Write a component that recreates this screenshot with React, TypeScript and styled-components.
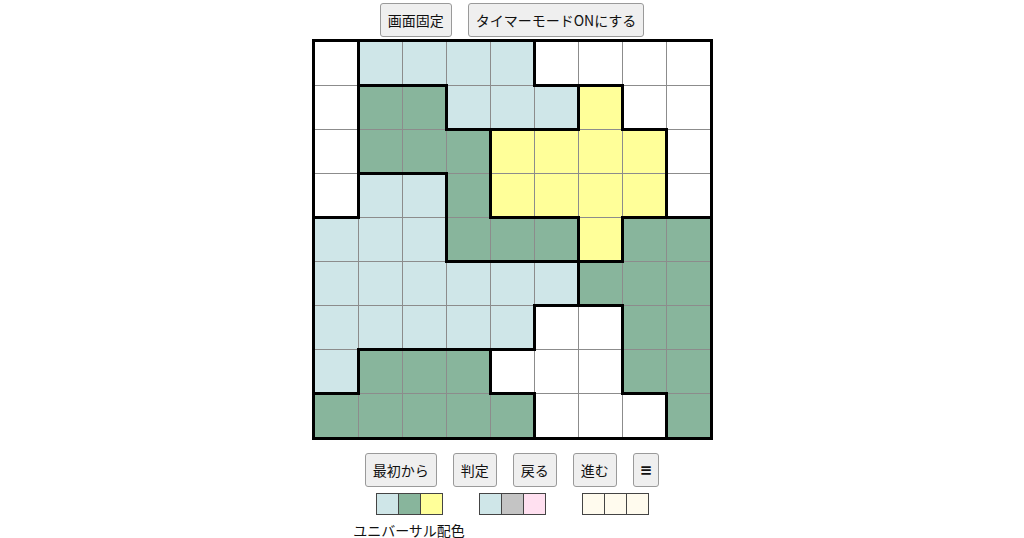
import React from "react";
import styled, { createGlobalStyle } from "styled-components";

const GlobalStyle = createGlobalStyle`
  body {
    margin: 0;
    background: #fff;
    font-family: "Noto Sans CJK JP", "Noto Sans", sans-serif;
    color: #111;
  }
`;

const COLORS: Record<string, string> = {
  W: "#ffffff",
  L: "#cfe6e8",
  G: "#88b59c",
  Y: "#ffff99",
};

const GRID = [
  "WLLLLWWWW",
  "WGGLLLYWW",
  "WGGGYYYYW",
  "WLLGYYYYW",
  "LLLGGGYGG",
  "LLLLLLGGG",
  "LLLLLWWGG",
  "LGGGWWWGG",
  "GGGGGWWWG",
];

const PALETTES = [
  { colors: ["#cfe6e8", "#88b59c", "#ffff99"], label: "ユニバーサル配色" },
  { colors: ["#cfe6e8", "#c4c4c4", "#ffe0f0"] },
  { colors: ["#fffbee", "#fffbee", "#fffbee"] },
];

const Page = styled.div`
  display: flex;
  flex-direction: column;
  align-items: center;
  padding-top: 3px;
`;

const ButtonRow = styled.div`
  display: flex;
  justify-content: center;
  gap: 16px;
`;

const BottomRow = styled(ButtonRow)`
  margin-top: 13px;
`;

const Button = styled.button`
  height: 34px;
  padding: 0 7px;
  font-family: "Noto Sans CJK JP", sans-serif;
  font-size: 14px;
  color: #111;
  background: #efefef;
  border: 1px solid #9a9a9a;
  border-radius: 3px;
  cursor: pointer;
`;

const MenuButton = styled(Button)`
  padding: 0 6px;
  font-family: "DejaVu Sans", sans-serif;
  font-size: 15px;
  font-weight: bold;
`;

const Board = styled.div`
  margin-top: 2px;
  display: grid;
  grid-template-columns: repeat(9, 43px);
  grid-auto-rows: 43px;
  gap: 1px;
  background: #8c8c8c;
  border: 3px solid #000;
`;

const Cell = styled.div<{ $fill: string; $right: boolean; $bottom: boolean }>`
  position: relative;
  background: ${(p) => p.$fill};

  &::after {
    content: "";
    display: ${(p) => (p.$right ? "block" : "none")};
    position: absolute;
    top: -2px;
    bottom: -2px;
    right: -2px;
    width: 3px;
    background: #000;
    z-index: 1;
  }

  &::before {
    content: "";
    display: ${(p) => (p.$bottom ? "block" : "none")};
    position: absolute;
    left: -2px;
    right: -2px;
    bottom: -2px;
    height: 3px;
    background: #000;
    z-index: 1;
  }
`;

const PaletteRow = styled.div`
  margin-top: 6px;
  display: flex;
  gap: 36px;
  align-items: flex-start;
`;

const PaletteGroup = styled.div`
  width: 67px;
  display: flex;
  flex-direction: column;
  align-items: center;
`;

const Swatches = styled.div`
  display: flex;
`;

const Swatch = styled.div<{ $color: string }>`
  width: 21px;
  height: 20px;
  background: ${(p) => p.$color};
  border: 1px solid #444;
  & + & {
    margin-left: -1px;
  }
`;

const PaletteLabel = styled.div`
  margin-top: 7px;
  font-size: 14px;
  line-height: 16px;
  white-space: nowrap;
  color: #111;
`;

export default function App() {
  return (
    <>
      <GlobalStyle />
      <Page>
        <ButtonRow>
          <Button>画面固定</Button>
          <Button>タイマーモードONにする</Button>
        </ButtonRow>

        <Board>
          {GRID.map((row, r) =>
            row.split("").map((c, col) => {
              const right = col < 8 && row[col + 1] !== c;
              const bottom = r < 8 && GRID[r + 1][col] !== c;
              return (
                <Cell
                  key={`${r}-${col}`}
                  $fill={COLORS[c]}
                  $right={right}
                  $bottom={bottom}
                />
              );
            })
          )}
        </Board>

        <BottomRow>
          <Button>最初から</Button>
          <Button>判定</Button>
          <Button>戻る</Button>
          <Button>進む</Button>
          <MenuButton>≡</MenuButton>
        </BottomRow>

        <PaletteRow>
          {PALETTES.map((p, i) => (
            <PaletteGroup key={i}>
              <Swatches>
                {p.colors.map((c, j) => (
                  <Swatch key={j} $color={c} />
                ))}
              </Swatches>
              {p.label && <PaletteLabel>{p.label}</PaletteLabel>}
            </PaletteGroup>
          ))}
        </PaletteRow>
      </Page>
    </>
  );
}
